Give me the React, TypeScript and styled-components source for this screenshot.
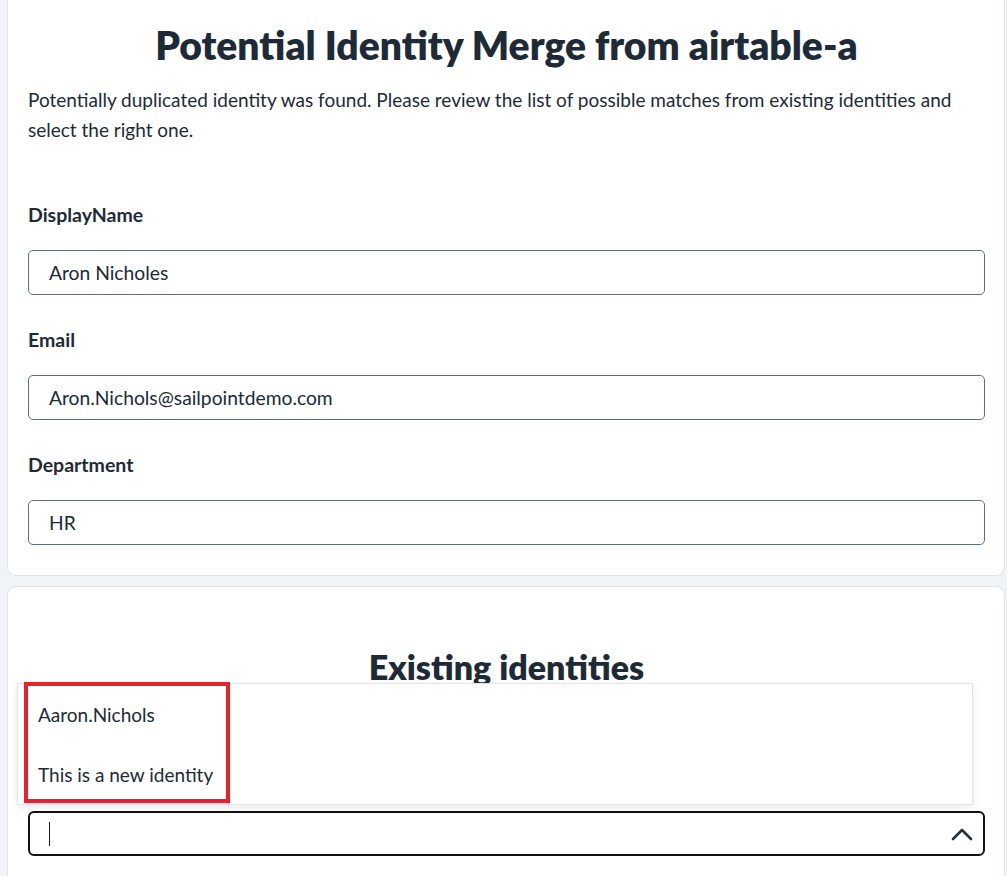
import React from "react";
import styled, { createGlobalStyle } from "styled-components";

const Global = createGlobalStyle`
  html, body { margin: 0; padding: 0; }
  body {
    background: #f1f4f7;
    font-family: "Lato", "Noto Sans", sans-serif;
    color: #1e2a38;
    overflow: hidden;
  }
`;

const Page = styled.div`
  display: flex;
  flex-direction: column;
  gap: 10px;
  padding: 0 2px 0 7px;
`;

const Card = styled.section<{ $openTop?: boolean }>`
  background: #ffffff;
  border: 1px solid #dfe3e8;
  border-top: ${(p) => (p.$openTop ? "none" : "1px solid #dfe3e8")};
  border-radius: ${(p) => (p.$openTop ? "0 0 9px 9px" : "9px")};
  padding: ${(p) => (p.$openTop ? "21px 19px 30px 20px" : "58px 19px 40px 20px")};
  display: flex;
  flex-direction: column;
`;

const Title = styled.h1`
  margin: 0;
  text-align: center;
  font-size: 39px;
  line-height: 48px;
  font-weight: 800;
`;

const Description = styled.p`
  margin: 16px 0 0;
  font-size: 19px;
  line-height: 30px;
`;

const Fields = styled.div`
  display: flex;
  flex-direction: column;
  gap: 33px;
  margin-top: 58px;
`;

const Field = styled.div`
  display: flex;
  flex-direction: column;
  gap: 23px;
`;

const Label = styled.label`
  font-size: 19.5px;
  font-weight: 700;
  line-height: 24px;
`;

const TextBox = styled.div`
  height: 45px;
  box-sizing: border-box;
  border: 1px solid #5f6e7d;
  border-radius: 5px;
  display: flex;
  align-items: center;
  padding: 0 20px;
  font-size: 19.25px;
`;

const SubTitle = styled.h2`
  margin: 0;
  text-align: center;
  font-size: 34px;
  line-height: 44px;
  font-weight: 800;
`;

const SelectWrap = styled.div`
  position: relative;
  margin-top: 122px;
`;

const SelectBox = styled.div`
  height: 45px;
  box-sizing: border-box;
  border: 2px solid #121212;
  border-radius: 6px;
  display: flex;
  align-items: center;
  justify-content: space-between;
  padding: 0 10px 0 19px;
`;

const Caret = styled.span`
  width: 1px;
  height: 24px;
  background: #1a1a1a;
`;

const Menu = styled.ul`
  position: absolute;
  left: -11px;
  right: 12px;
  bottom: calc(100% + 6px);
  margin: 0;
  padding: 0;
  list-style: none;
  background: #ffffff;
  border: 1px solid #e2e4e7;
  box-shadow: 0 3px 8px rgba(0, 0, 0, 0.08);
  display: flex;
  flex-direction: column;
`;

const MenuItem = styled.li`
  height: 60px;
  display: flex;
  align-items: center;
  padding-left: 20px;
  font-size: 19px;
`;

const Highlight = styled.div`
  position: absolute;
  left: 6px;
  top: -2px;
  width: 206px;
  height: 121px;
  box-sizing: border-box;
  border: 4px solid #e8222a;
  pointer-events: none;
`;

const Chevron = () => (
  <svg width="22" height="14" viewBox="0 0 22 14" fill="none">
    <path
      d="M2 12 L11 3 L20 12"
      stroke="#27313d"
      strokeWidth="2.6"
      strokeLinecap="round"
      strokeLinejoin="round"
    />
  </svg>
);

const fields = [
  { label: "DisplayName", value: "Aron Nicholes" },
  { label: "Email", value: "Aron.Nichols@sailpointdemo.com" },
  { label: "Department", value: "HR" },
];

export default function App() {
  return (
    <>
      <Global />
      <Page>
        <Card $openTop>
          <Title>Potential Identity Merge from airtable-a</Title>
          <Description>
            Potentially duplicated identity was found. Please review the list of
            possible matches from existing identities and select the right one.
          </Description>
          <Fields>
            {fields.map((f) => (
              <Field key={f.label}>
                <Label>{f.label}</Label>
                <TextBox>{f.value}</TextBox>
              </Field>
            ))}
          </Fields>
        </Card>
        <Card>
          <SubTitle>Existing identities</SubTitle>
          <SelectWrap>
            <Menu>
              <MenuItem>Aaron.Nichols</MenuItem>
              <MenuItem>This is a new identity</MenuItem>
              <Highlight />
            </Menu>
            <SelectBox>
              <Caret />
              <Chevron />
            </SelectBox>
          </SelectWrap>
        </Card>
      </Page>
    </>
  );
}
